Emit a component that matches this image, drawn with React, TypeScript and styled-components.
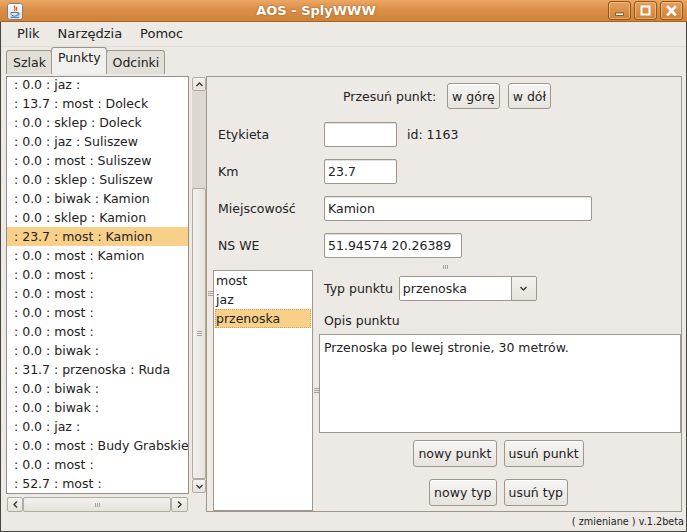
import React from 'react';
import styled, { createGlobalStyle } from 'styled-components';

const GlobalStyle = createGlobalStyle`
  html, body { margin: 0; padding: 0; background: #edeae6; }
  body {
    font-family: 'DejaVu Sans', 'Liberation Sans', sans-serif;
    font-size: 12.5px;
    color: #222;
  }
  * { box-sizing: border-box; }
`;

const line = '#a0968b';
const selection = '#f9d089';

const points = [
  ': 0.0 : jaz :',
  ': 13.7 : most : Doleck',
  ': 0.0 : sklep : Doleck',
  ': 0.0 : jaz : Suliszew',
  ': 0.0 : most : Suliszew',
  ': 0.0 : sklep : Suliszew',
  ': 0.0 : biwak : Kamion',
  ': 0.0 : sklep : Kamion',
  ': 23.7 : most : Kamion',
  ': 0.0 : most : Kamion',
  ': 0.0 : most :',
  ': 0.0 : most :',
  ': 0.0 : most :',
  ': 0.0 : most :',
  ': 0.0 : biwak :',
  ': 31.7 : przenoska : Ruda',
  ': 0.0 : biwak :',
  ': 0.0 : biwak :',
  ': 0.0 : jaz :',
  ': 0.0 : most : Budy Grabskie',
  ': 0.0 : most :',
  ': 52.7 : most :',
];

const types = ['most', 'jaz', 'przenoska'];

function Chevron({ dir }: { dir: 'up' | 'down' | 'left' | 'right' }) {
  const d = {
    up: 'M2.5 7 L5.5 4 L8.5 7',
    down: 'M2.5 4 L5.5 7 L8.5 4',
    left: 'M7 2.5 L4 5.5 L7 8.5',
    right: 'M4 2.5 L7 5.5 L4 8.5',
  }[dir];
  return (
    <svg width="11" height="11" viewBox="0 0 11 11">
      <path d={d} fill="none" stroke="#3a3632" strokeWidth="1.4" />
    </svg>
  );
}

function GripBars({ vertical }: { vertical?: boolean }) {
  return vertical ? (
    <svg width="5" height="4" viewBox="0 0 5 4">
      <path d="M0.5 0v4M2.5 0v4M4.5 0v4" stroke="#aaa298" strokeWidth="1" />
    </svg>
  ) : (
    <svg width="5" height="5" viewBox="0 0 5 5">
      <path d="M0 0.5h5M0 2.5h5M0 4.5h5" stroke="#aaa298" strokeWidth="1" />
    </svg>
  );
}

function JavaIcon() {
  return (
    <svg width="16" height="17" viewBox="0 0 16 17">
      <defs>
        <linearGradient id="jbg" x1="0" y1="0" x2="0" y2="1">
          <stop offset="0" stopColor="#ffffff" />
          <stop offset="1" stopColor="#d8dde4" />
        </linearGradient>
      </defs>
      <rect x="0.5" y="0.5" width="15" height="16" rx="2" fill="url(#jbg)" stroke="#7d7f85" />
      <path d="M8 2.5 C6 4.5 9.5 5.5 7.5 8 M9.8 4 C8.8 5.2 10.5 6 9.4 7.6" fill="none" stroke="#e2501c" strokeWidth="1.2" />
      <path d="M4 9.5 H11 V10.5 C11 12.5 9.5 13 7.5 13 C5.5 13 4 12.5 4 10.5 Z" fill="none" stroke="#4d6fa3" strokeWidth="1" />
      <path d="M11 10 C13 10 13 12 10.5 12.3" fill="none" stroke="#4d6fa3" strokeWidth="1" />
      <path d="M3.5 14.3 H12" stroke="#4d6fa3" strokeWidth="1" />
    </svg>
  );
}

function WinIcon({ kind }: { kind: 'min' | 'max' | 'close' }) {
  return (
    <svg width="13" height="12" viewBox="0 0 13 12">
      {kind === 'min' && (
        <rect x="2.5" y="8" width="8" height="2.5" fill="#fff" stroke="#7a4613" strokeWidth="0.8" />
      )}
      {kind === 'max' && (
        <rect x="2.5" y="1.5" width="8" height="8" fill="none" stroke="#fff" strokeWidth="2" />
      )}
      {kind === 'close' && (
        <path d="M3 2 L10 9.5 M10 2 L3 9.5" stroke="#fff" strokeWidth="2.6" strokeLinecap="square" />
      )}
    </svg>
  );
}

export default function App() {
  return (
    <>
      <GlobalStyle />
      <Window>
        <TitleBar>
          <IconSlot>
            <JavaIcon />
          </IconSlot>
          <Title>AOS - SplyWWW</Title>
          <WinButtons>
            <WinButton>
              <WinIcon kind="min" />
            </WinButton>
            <WinButton>
              <WinIcon kind="max" />
            </WinButton>
            <WinButton>
              <WinIcon kind="close" />
            </WinButton>
          </WinButtons>
        </TitleBar>

        <Frame>
          <MenuBar>
            <MenuItem>Plik</MenuItem>
            <MenuItem>Narzędzia</MenuItem>
            <MenuItem>Pomoc</MenuItem>
          </MenuBar>

          <TabStrip>
            <Tab>Szlak</Tab>
            <Tab $active>Punkty</Tab>
            <Tab>Odcinki</Tab>
          </TabStrip>

          <Body>
            <ScrollPane>
              <Viewport>
                <ListInner>
                  {points.map((p, i) => (
                    <PointRow key={i} $selected={i === 8}>
                      {p}
                    </PointRow>
                  ))}
                </ListInner>
              </Viewport>
              <VScroll>
                <ScrollButton $h={14}>
                  <Chevron dir="up" />
                </ScrollButton>
                <VTrack $offset={97}>
                  <VThumb>
                    <GripBars />
                  </VThumb>
                </VTrack>
                <ScrollButton $h={14}>
                  <Chevron dir="down" />
                </ScrollButton>
              </VScroll>
              <HScroll>
                <ScrollButton $w={16}>
                  <Chevron dir="left" />
                </ScrollButton>
                <HThumb>
                  <GripBars vertical />
                </HThumb>
                <ScrollButton $w={17}>
                  <Chevron dir="right" />
                </ScrollButton>
              </HScroll>
            </ScrollPane>

            <DetailPanel>
              <MoveRow>
                <MoveLabel>Przesuń punkt:</MoveLabel>
                <Button $h={26}>w górę</Button>
                <Button $h={26}>w dół</Button>
              </MoveRow>

              <FieldGrid>
                <FieldLabel>Etykieta</FieldLabel>
                <FieldLine>
                  <TextField $w={73} />
                  <IdText>id: 1163</IdText>
                </FieldLine>
                <FieldLabel>Km</FieldLabel>
                <FieldLine>
                  <TextField $w={73}>23.7</TextField>
                </FieldLine>
                <FieldLabel>Miejscowość</FieldLabel>
                <FieldLine>
                  <TextField $w={268}>Kamion</TextField>
                </FieldLine>
                <FieldLabel>NS WE</FieldLabel>
                <FieldLine>
                  <TextField $w={138}>51.94574 20.26389</TextField>
                </FieldLine>
              </FieldGrid>

              <SplitDivider>
                <GripBars vertical />
              </SplitDivider>

              <LowerSplit>
                <SideGrip>
                  <GripBars />
                </SideGrip>
                <TypeList>
                  {types.map((t, i) => (
                    <TypeRow key={t} $selected={i === 2}>
                      {t}
                    </TypeRow>
                  ))}
                </TypeList>
                <MidGrip>
                  <GripBars />
                </MidGrip>
                <TypeForm>
                  <TypeLine>
                    <span>Typ punktu</span>
                    <Combo>
                      <ComboValue>przenoska</ComboValue>
                      <ComboArrow>
                        <Chevron dir="down" />
                      </ComboArrow>
                    </Combo>
                  </TypeLine>
                  <OpisLabel>Opis punktu</OpisLabel>
                  <TextArea>Przenoska po lewej stronie, 30 metrów.</TextArea>
                  <ButtonGrid>
                    <Button $h={27}>nowy punkt</Button>
                    <Button $h={27}>usuń punkt</Button>
                    <Button $h={27}>nowy typ</Button>
                    <Button $h={27}>usuń typ</Button>
                  </ButtonGrid>
                </TypeForm>
              </LowerSplit>
            </DetailPanel>
          </Body>

          <StatusBar>( zmieniane ) v.1.2beta</StatusBar>
        </Frame>
      </Window>
    </>
  );
}

const Window = styled.div`
  width: 687px;
  height: 532px;
  display: flex;
  flex-direction: column;
  overflow: hidden;
  background: #edeae6;
`;

const TitleBar = styled.div`
  height: 22px;
  flex: none;
  display: grid;
  grid-template-columns: 24px 1fr auto;
  align-items: center;
  background: linear-gradient(#eca865 0%, #dc914a 40%, #cf8238 100%);
  border-bottom: 1px solid #a8631f;
`;

const IconSlot = styled.div`
  display: flex;
  padding-left: 7px;
  padding-top: 1px;
`;

const Title = styled.div`
  text-align: center;
  color: #fff;
  font-weight: bold;
  font-size: 13px;
  text-shadow: 0 0 2px rgba(110, 60, 10, 0.7);
`;

const WinButtons = styled.div`
  display: flex;
  gap: 3px;
  padding-right: 4px;
`;

const WinButton = styled.div`
  width: 23px;
  height: 19px;
  display: flex;
  align-items: center;
  justify-content: center;
  border: 1px solid #93561b;
  border-radius: 3px;
  background: linear-gradient(#e4a05c, #d08338);
  box-shadow: inset 0 0 0 1px rgba(255, 225, 180, 0.45);
`;

const Frame = styled.div`
  flex: 1;
  display: flex;
  flex-direction: column;
  border: 1px solid #4a4440;
  border-top: none;
`;

const MenuBar = styled.div`
  height: 25px;
  flex: none;
  display: flex;
  align-items: center;
  padding-left: 7px;
  font-size: 13px;
  border-bottom: 1px solid #e2ded8;
`;

const MenuItem = styled.div`
  padding: 0 9px;
  padding-bottom: 2px;
`;

const TabStrip = styled.div`
  height: 27px;
  flex: none;
  display: flex;
  align-items: flex-end;
  padding-left: 5px;
`;

const Tab = styled.div<{ $active?: boolean }>`
  height: ${(p) => (p.$active ? 27 : 24)}px;
  padding: ${(p) => (p.$active ? '2px 5px 0 6px' : '4px 5px 0 6px')};
  margin-left: -1px;
  border: 1px solid ${line};
  border-bottom: none;
  border-radius: 3px 3px 0 0;
  background: ${(p) => (p.$active ? '#f2f0ed' : '#e2ded8')};
  position: relative;
  z-index: ${(p) => (p.$active ? 1 : 0)};
  &:first-child {
    margin-left: 0;
  }
`;

const Body = styled.div`
  height: 438px;
  flex: none;
  display: flex;
  padding: 2px 4px 0 5px;
`;

const ScrollPane = styled.div`
  width: 200px;
  height: 436px;
  flex: none;
  display: grid;
  grid-template-columns: 183px 14px;
  grid-template-rows: 418px 15px;
  column-gap: 3px;
  row-gap: 3px;
`;

const Viewport = styled.div`
  border: 1px solid #978d82;
  background: #fff;
  overflow: hidden;
`;

const ListInner = styled.div`
  margin-top: -2px;
`;

const PointRow = styled.div<{ $selected?: boolean }>`
  height: 19px;
  line-height: 19px;
  padding-left: 7px;
  white-space: nowrap;
  background: ${(p) => (p.$selected ? selection : 'transparent')};
`;

const VScroll = styled.div`
  display: flex;
  flex-direction: column;
  padding: 1px 0;
`;

const ScrollButton = styled.div<{ $h?: number; $w?: number }>`
  flex: none;
  ${(p) => (p.$h ? `height: ${p.$h}px;` : '')}
  ${(p) => (p.$w ? `width: ${p.$w}px;` : '')}
  display: flex;
  align-items: center;
  justify-content: center;
  border: 1px solid #b3aaa0;
  border-radius: 2px;
  background: linear-gradient(#f5f3f0, #e5e1db);
`;

const VTrack = styled.div<{ $offset: number }>`
  flex: 1;
  display: flex;
  flex-direction: column;
  padding-top: ${(p) => p.$offset}px;
  background: #dcd7d0;
`;

const VThumb = styled.div`
  flex: 1;
  display: flex;
  align-items: center;
  justify-content: center;
  border: 1px solid #b3aaa0;
  border-radius: 2px;
  background: linear-gradient(90deg, #f3f1ee, #e6e2dc);
`;

const HScroll = styled.div`
  display: flex;
  padding: 0 1px;
`;

const HThumb = styled.div`
  flex: 1;
  display: flex;
  align-items: center;
  justify-content: center;
  border: 1px solid #b3aaa0;
  border-radius: 2px;
  background: linear-gradient(#f4f2ef, #e5e1db);
`;

const DetailPanel = styled.div`
  width: 476px;
  height: 436px;
  flex: none;
  display: flex;
  flex-direction: column;
  border: 1px solid ${line};
`;

const MoveRow = styled.div`
  margin-top: 6px;
  display: flex;
  justify-content: center;
  align-items: center;
  gap: 8px;
  padding-left: 6px;
`;

const MoveLabel = styled.span`
  margin-right: 3px;
`;

const Button = styled.div<{ $h: number }>`
  height: ${(p) => p.$h}px;
  padding: 0 4px;
  display: inline-flex;
  align-items: center;
  justify-content: center;
  white-space: nowrap;
  border: 1px solid ${line};
  border-radius: 3px;
  background: linear-gradient(#f7f6f4, #e7e3de);
  box-shadow: inset 0 1px 0 #fff;
`;

const FieldGrid = styled.div`
  margin-top: 13px;
  padding-left: 11px;
  display: grid;
  grid-template-columns: 106px auto;
  grid-auto-rows: 25px;
  row-gap: 12px;
  align-items: center;
`;

const FieldLabel = styled.span``;

const FieldLine = styled.div`
  display: flex;
  align-items: center;
`;

const TextField = styled.div<{ $w: number }>`
  width: ${(p) => p.$w}px;
  height: 25px;
  line-height: 23px;
  padding-left: 3px;
  background: #fff;
  border: 1px solid ${line};
  border-radius: 2px;
  box-shadow: inset 0 1px 0 #e4e0da;
  white-space: nowrap;
`;

const IdText = styled.span`
  margin-left: 10px;
`;

const SplitDivider = styled.div`
  height: 12px;
  flex: none;
  display: flex;
  justify-content: center;
  padding-top: 7px;
  padding-left: 3px;
`;

const LowerSplit = styled.div`
  flex: 1;
  display: flex;
`;

const SideGrip = styled.div`
  width: 6px;
  flex: none;
  display: flex;
  justify-content: center;
  padding-top: 21px;
`;

const TypeList = styled.div`
  width: 100px;
  flex: none;
  border: 1px solid ${line};
  background: #fff;
  padding: 0 1px;
`;

const TypeRow = styled.div<{ $selected?: boolean }>`
  height: 19px;
  line-height: 19px;
  padding-left: 1px;
  background: ${(p) => (p.$selected ? selection : 'transparent')};
  outline: ${(p) => (p.$selected ? '1px dotted #c9a25e' : 'none')};
  outline-offset: -1px;
`;

const MidGrip = styled.div`
  width: 6px;
  flex: none;
  display: flex;
  align-items: center;
  justify-content: center;
`;

const TypeForm = styled.div`
  flex: 1;
  display: flex;
  flex-direction: column;
`;

const TypeLine = styled.div`
  margin-top: 6px;
  padding-left: 5px;
  height: 25px;
  display: flex;
  align-items: center;
  gap: 6px;
`;

const Combo = styled.div`
  width: 138px;
  height: 25px;
  display: flex;
  border: 1px solid ${line};
  border-radius: 2px;
  overflow: hidden;
`;

const ComboValue = styled.div`
  flex: 1;
  background: #fff;
  line-height: 23px;
  padding-left: 3px;
`;

const ComboArrow = styled.div`
  width: 25px;
  display: flex;
  align-items: center;
  justify-content: center;
  border-left: 1px solid ${line};
  background: linear-gradient(#f5f3f0, #e6e2dc);
`;

const OpisLabel = styled.div`
  margin-top: 10px;
  height: 20px;
  line-height: 20px;
  padding-left: 5px;
`;

const TextArea = styled.div`
  margin-top: 3px;
  height: 99px;
  padding: 4px 4px;
  line-height: 17px;
  background: #fff;
  border: 1px solid ${line};
`;

const ButtonGrid = styled.div`
  margin-top: 7px;
  display: grid;
  grid-template-columns: 1fr 1fr;
  column-gap: 7px;
  row-gap: 12px;
  & > :nth-child(odd) {
    justify-self: end;
  }
  & > :nth-child(even) {
    justify-self: start;
  }
`;

const StatusBar = styled.div`
  flex: 1;
  display: flex;
  align-items: center;
  justify-content: flex-end;
  padding-right: 2px;
  padding-bottom: 1px;
  font-size: 9.7px;
`;
